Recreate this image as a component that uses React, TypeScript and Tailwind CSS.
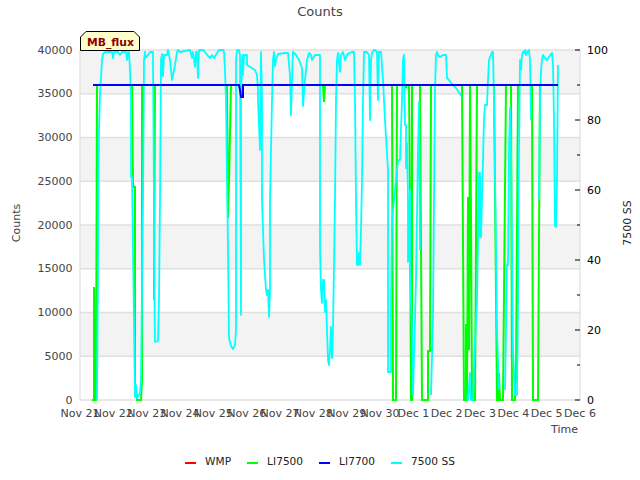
const green = "92,400 94,400 94,287 95,400 96,400 97,85 132,85 133,185 134,187 135,187 135,385 137,400 141,400 142,380 142,85 154,85 154,300 155,85 227,85 228,218 229,180 231,85 323,85 324,102 325,85 392,85 393,400 396,400 397,85 406,85 406,88 407,85 409,85 410,200 411,400 412,400 412,85 413,85 420,85 422,400 428,400 428,351 430,351 431,85 462,85 464,400 466,400 466,324 467,400 468,197 469,350 470,85 471,217 472,400 475,400 477,85 494,85 497,400 498,400 498,374 499,374 500,400 503,400 506,85 511,85 512,400 515,400 515,380 516,380 518,85 532,85 533,400 538,400 540,85 558,85";

const cyan = [
  "97,400 99,130 100,95 102,60 103,54 105,52 112,52 113,58 114,52 118,52 120,55 122,52 126,52 127,60 128,52 129,52 130,70 131,100 131,177 132,177 133,250 135,397 136,385 137,398 140,393 141,380 143,200 144,60 145,52 145,58 148,55 150,52 153,52 153,60 154,200 154,250 155,342 158,341 159,300 160,200 161,60 162,54 162,75 163,76 164,55 167,55 168,50 170,60 172,80 175,65 177,52 178,50 180,52 190,50 191,54 192,58 193,52 195,67 196,52 197,52 198,78 199,50 203,50 205,52 208,56 210,58 212,55 214,58 217,53 219,50 223,50 224,52 225,70 226,100 227,178 228,250 229,338 231,346 233,349 235,345 236,330 236,200 236,60 237,50 239,50 240,55 241,315 241,100 242,60 243,55 243,75 244,55 247,55 247,65 255,70 257,75 258,90 258,100 260,150 261,52 262,100 262,200 264,260 266,290 267,295 268,290 269,317 270,290 270,200 271,150 272,100 273,60 274,52 275,66 276,60 278,54 285,53 288,53 290,75 291,115 292,80 293,52 296,55 299,60 302,68 303,106 305,80 307,60 309,53 311,55 312,60 315,55 320,55 320,100 320,250 321,290 322,303 323,280 324,280 325,312 326,300 327,330 328,360 329,365 330,350 331,327 332,358 333,330 335,200 336,100 337,60 338,53 340,72 341,55 343,52 345,60 347,55 349,53 352,52 354,52 355,100 356,200 357,265 358,265 359,253 360,265 361,230 362,180 363,100 364,52 367,52 369,55 370,120 371,60 372,53 374,50 375,50 377,52 378,100 379,52 381,52 383,80 385,120 388,170 388,372 390,372 391,372 391,300 392,222 394,200 398,160 400,160 402,100 403,60 404,55 405,125 406,125 406,168 407,143 408,200 408,262 409,250 410,190 410,270 412,330 413,395 416,280 418,150 419,102 420,250",
  "431,395 433,320 434,200 435,90 436,55 437,52 438,55 440,57 443,55 446,55 447,78 449,80 452,84 456,88 462,97",
  "467,395 468,400 470,373 470,390 471,400 473,400 475,340 477,303 479,173 480,237 480,173 481,237 482,200 484,120 485,105 487,105 488,80 489,60 490,57 491,55 492,52 493,52 494,100 496,250 497,330 499,390",
  "505,390 507,265 508,265 509,150 510,108 511,150 512,250 513,350 515,395 517,395 518,300 519,150 520,60 521,70 522,55 523,52 524,53 525,50 526,55 527,52 529,50 530,60 531,120",
  "539,200 540,100 541,70 542,60 543,55 545,58 547,60 549,57 552,53 553,65 554,120 555,226 556,227 557,180 558,65",
];

const blue = "93,85 239,85 240,90 241,97 243,97 243,85 558,85";

const yLeft = [0, 5000, 10000, 15000, 20000, 25000, 30000, 35000, 40000];
const yOf = (v: number) => 400 - (v * 350) / 40000;
const bands = [40000, 30000, 20000, 10000];
const days = ["Nov 21","Nov 22","Nov 23","Nov 24","Nov 25","Nov 26","Nov 27","Nov 28","Nov 29","Nov 30","Dec 1","Dec 2","Dec 3","Dec 4","Dec 5","Dec 6"];
const legend = [
  { name: "WMP", line: "bg-[#ff0000]" },
  { name: "LI7500", line: "bg-[#00ff00]" },
  { name: "LI7700", line: "bg-[#0000ff]" },
  { name: "7500 SS", line: "bg-[#00ffff]" },
];

export default function App() {
  return (
    <div className="flex h-[480px] w-[640px] flex-col bg-white font-['DejaVu_Sans',sans-serif]">
      <div className="flex h-6 items-start justify-center pt-[1px] text-[13px] leading-[22px] text-[#444444]">Counts</div>
      <svg viewBox="0 24 640 416" className="h-[416px] w-[640px]">
        {bands.map((v) => (
          <rect key={v} x={80} y={yOf(v)} width={500} height={43.75} className="fill-[#f3f3f3]" />
        ))}
        {yLeft.map((v) => (
          <line key={v} x1={80} x2={580} y1={yOf(v)} y2={yOf(v)} className="stroke-[#e0e0e0]" strokeWidth={1.3} />
        ))}
        <line x1={80} x2={80} y1={50} y2={400} className="stroke-[#e0e0e0]" strokeWidth={1.3} />
        <line x1={580} x2={580} y1={50} y2={400} className="stroke-[#e0e0e0]" strokeWidth={1.3} />

        <polyline points={green} fill="none" className="stroke-[#00ff00]" strokeWidth={2} strokeLinejoin="miter" />
        {cyan.map((p) => (
          <polyline key={p} points={p} fill="none" className="stroke-[#00ffff]" strokeWidth={1.8} strokeLinejoin="round" />
        ))}
        <polyline points={blue} fill="none" className="stroke-[#0000ff]" strokeWidth={2} />

        {yLeft.map((v) => (
          <text key={v} x={72.5} y={yOf(v) + 3.5} textAnchor="end" className="fill-[#444444] text-[11px]">{v}</text>
        ))}
        {days.map((d, i) => (
          <text key={d} x={80 + (i * 500) / 15} y={417} textAnchor="middle" className="fill-[#444444] text-[11px]">{d}</text>
        ))}
        {Array.from({ length: 11 }, (_, i) => i).map((i) => (
          <line key={i} x1={i % 2 === 0 ? 575 : 577} x2={580} y1={400 - i * 35} y2={400 - i * 35} className="stroke-[#000000]" strokeWidth={1} />
        ))}
        {[0, 20, 40, 60, 80, 100].map((v) => (
          <text key={v} x={587} y={403.5 - v * 3.5} className="fill-[#000000] text-[11px]">{v}</text>
        ))}
        <text x={578} y={433} textAnchor="end" className="fill-[#444444] text-[11px]">Time</text>
        <text transform="translate(20 223) rotate(-90)" textAnchor="middle" className="fill-[#444444] text-[11px]">Counts</text>
        <text transform="translate(631 223) rotate(-90)" textAnchor="middle" className="fill-[#222222] text-[11px]">7500 SS</text>

        <polygon points="80.5,50.5 80.5,37 86,31.5 134,31.5 139.5,37 139.5,50.5" className="fill-[#ffffcc] stroke-[#000000]" strokeWidth={1} />
        <text x={87} y={46} className="fill-[#8b0000] text-[10.8px] font-bold">MB_flux</text>
      </svg>
      <div className="flex h-10 items-start justify-center gap-4 pt-[15px] text-[10.6px] leading-[13px] text-[#222222]">
        {legend.map((l) => (
          <div key={l.name} className="flex items-center gap-[9px]">
            <span className={`mt-[2px] h-[2px] w-[11px] ${l.line}`} />
            <span>{l.name}</span>
          </div>
        ))}
      </div>
    </div>
  );
}
